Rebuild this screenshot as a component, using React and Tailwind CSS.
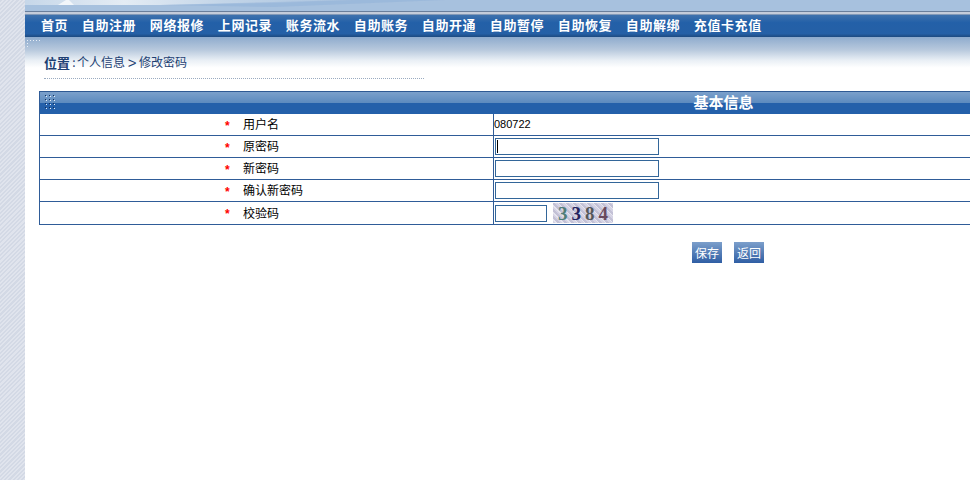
const NAV = ["首页", "自助注册", "网络报修", "上网记录", "账务流水", "自助账务", "自助开通", "自助暂停", "自助恢复", "自助解绑", "充值卡充值"];

const ROWS = [
  { label: "用户名", value: <span className="pb-[1px] font-['Liberation_Sans',sans-serif] text-[11px] leading-none text-black">080722</span> },
  { label: "原密码", value: <PwdInput caret /> },
  { label: "新密码", value: <PwdInput /> },
  { label: "确认新密码", value: <PwdInput /> },
  { label: "校验码", value: <Captcha /> },
];

function PwdInput({ caret }) {
  return (
    <div className="ml-px w-[164px] h-[17px] border border-[#336699] bg-white flex items-center pl-[1px]">
      {caret && <span className="w-px h-[13px] bg-black" />}
    </div>
  );
}

function Captcha() {
  return (
    <div className="ml-px flex items-center gap-[6px]">
      <div className="mt-[1px] w-[52px] h-[17px] border border-[#336699] bg-white" />
      <div className="w-[60px] h-[20px] flex items-center justify-center gap-[4px] font-['Liberation_Serif',serif] font-bold text-[19px] leading-none bg-[repeating-linear-gradient(45deg,#d5d3e4_0px,#d5d3e4_2px,#e6e5ef_2px,#e6e5ef_3px,#c3c1d6_3px,#c3c1d6_5px)]">
        <span className="text-[#4f7d78]">3</span>
        <span className="text-[#25235f]">3</span>
        <span className="text-[#55585a]">8</span>
        <span className="text-[#6a4a5c]">4</span>
      </div>
    </div>
  );
}

function Dots({ className }) {
  return (
    <svg className={className} width="11" height="15" viewBox="0 0 11 15">
      {[0, 4, 8, 12].map((y) =>
        [0, 4, 8].map((x) => (
          <g key={`${x}-${y}`}>
            <rect x={x + 1} y={y + 1} width="1" height="1" fill="#e6eef8" />
            <rect x={x} y={y} width="1" height="1" fill="#12305c" />
          </g>
        ))
      )}
    </svg>
  );
}

export default function App() {
  return (
    <div className="flex w-[970px] h-[480px] overflow-hidden bg-white font-['Noto_Sans_CJK_SC','Noto_Sans',sans-serif]">
      {/* left stripe */}
      <div className="w-[25px] shrink-0 bg-[repeating-linear-gradient(135deg,#d3d9e5_0px,#d3d9e5_1.5px,#e0e4ed_1.5px,#e0e4ed_3px)]" />

      <div className="flex-1 min-w-0 flex flex-col">
        {/* banner */}
        <div className="relative h-[11px] shrink-0 overflow-hidden bg-[#a7c1de]">
          <svg className="absolute left-0 top-0" width="945" height="11" viewBox="0 0 945 11">
            <defs>
              <linearGradient id="sky" x1="0" x2="1" y1="0" y2="0">
                <stop offset="0" stopColor="#c6d7e9" />
                <stop offset="0.3" stopColor="#e4ecf4" />
                <stop offset="0.6" stopColor="#c3d5e8" />
                <stop offset="1" stopColor="#a7c1de" />
              </linearGradient>
            </defs>
            <polygon points="0,0 330,0 250,3 135,5 0,5" fill="url(#sky)" />
            <polygon points="33,5 41,0 44,0 49,5" fill="#f2f6fa" />
            <polygon points="135,5 330,0 420,0 250,7" fill="#8fb0d6" opacity="0.45" />
          </svg>
        </div>
        <div className="h-[4px] shrink-0 bg-[linear-gradient(180deg,#6a7f9c_0%,#6a7f9c_25%,#c4ccda_25%,#c4ccda_75%,#8299b8_75%,#8299b8_100%)]" />

        {/* nav */}
        <nav className="h-[22px] shrink-0 flex items-center gap-[13.6px] pl-[16px] pb-[4px] bg-[linear-gradient(180deg,#3f72ad_0%,#2360a8_35%,#2560a6_85%,#1d4a80_100%)] text-white font-bold text-[13px] tracking-[0.6px] leading-none whitespace-nowrap">
          {NAV.map((item) => (
            <span key={item}>{item}</span>
          ))}
        </nav>

        {/* breadcrumb */}
        <div className="relative h-[54px] shrink-0 pl-[19px] pt-[17px] bg-[linear-gradient(180deg,#8eabcd_0%,#b8c9dd_24%,#e9eff5_43%,#ffffff_57%)]">
          <div className="flex items-center h-[16px] text-[12px] leading-none text-[#1d3f73] whitespace-nowrap">
            <span className="w-[27px] font-bold text-[13px]">位置</span>
            <span className="w-[6px] text-center">:</span>
            <span>个人信息</span>
            <span className="w-[14px] text-center font-['Liberation_Sans',sans-serif] text-[15px]">&gt;</span>
            <span>修改密码</span>
          </div>
          <div className="w-[380px] mt-[8px] border-t border-dotted border-[#9aabc0]" />
          <svg className="absolute left-[2px] top-[3px]" width="13" height="8" viewBox="0 0 13 8">
            {[0, 3, 6, 9, 12].map((x) => (
              <rect key={x} x={x} y="0" width="1" height="1" fill="#e8eef6" />
            ))}
            {[3, 6].map((y) => (
              <rect key={y} x="0" y={y} width="1" height="1" fill="#e8eef6" />
            ))}
          </svg>
        </div>

        {/* form table */}
        <div className="ml-[14px] w-[1369px] shrink-0 border border-t-0 border-[#2f5c98]">
          <div className="relative h-[23px] flex items-center justify-center pb-[4px] border-t border-[#2f5a94] bg-[linear-gradient(180deg,#7ba0cb_0%,#5d8bbf_48%,#2460aa_50%,#2460aa_100%)] text-white font-bold text-[15px] leading-none">
            基本信息
            <Dots className="absolute left-[5px] top-[3px]" />
          </div>
          {ROWS.map((row, i) => (
            <div
              key={row.label}
              className={`flex ${i === 0 ? "h-[21px]" : i === 4 ? "h-[23px]" : "h-[22px]"} ${i > 0 ? "border-t border-[#2f5c98]" : ""}`}
            >
              <div className="w-[454px] shrink-0 flex items-center pb-[1px] pl-[185px] text-[12px] leading-none text-black border-r border-[#2f5c98]">
                <span className="w-[18px] pt-[3px] text-[#ff0000] font-['Liberation_Sans',sans-serif] text-[12px] font-bold">*</span>
                <span>{row.label}</span>
              </div>
              <div className="flex-1 flex items-center">{row.value}</div>
            </div>
          ))}
        </div>

        {/* buttons */}
        <div className="ml-[14px] w-[1369px] shrink-0 mt-[17px] pl-[9px] flex justify-center gap-[12px]">
          {["保存", "返回"].map((b) => (
            <button key={b} className="w-[30px] h-[21px] flex items-center justify-center text-[12px] leading-none text-white bg-[linear-gradient(180deg,#7c9fcb_0%,#2f5ea4_100%)]">
              {b}
            </button>
          ))}
        </div>
      </div>
    </div>
  );
}
